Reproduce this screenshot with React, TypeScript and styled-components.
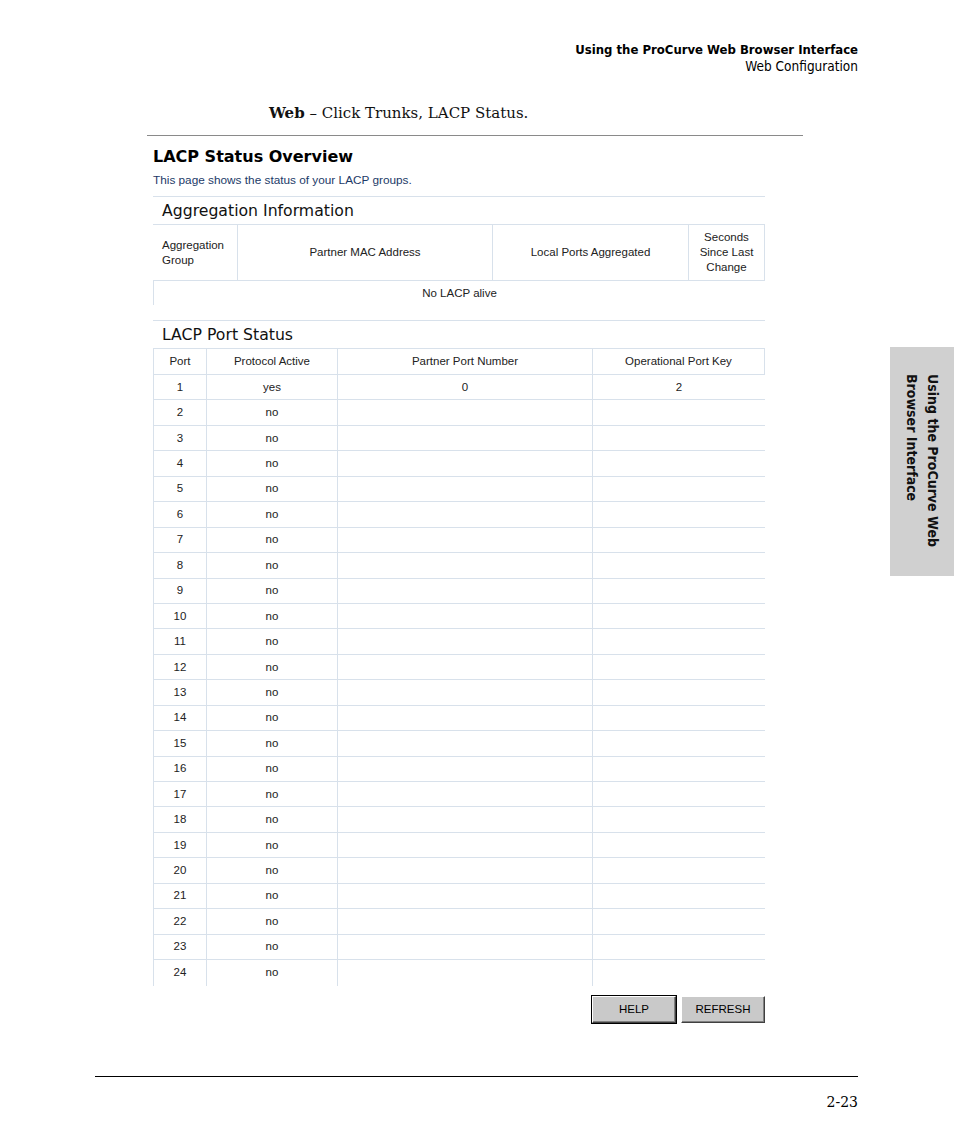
import styled, { createGlobalStyle } from 'styled-components';

// Column layouts for the two web tables (widths add up to 612px).
const aggCols = '84px 255px 196px 77px';
const portCols = '53px 131px 255px 173px';

const ports = Array.from({ length: 24 }, (_, i) => ({
  port: i + 1,
  active: i === 0 ? 'yes' : 'no',
  partner: i === 0 ? '0' : '',
  key: i === 0 ? '2' : '',
}));

function App() {
  return (
    <Page>
      <GlobalStyle />
      <Main>
        <RunningHead>
          <HeadTitle>Using the ProCurve Web Browser Interface</HeadTitle>
          <HeadSub>Web Configuration</HeadSub>
        </RunningHead>

        <Instruction>
          <b>Web</b> – Click Trunks, LACP Status.
        </Instruction>
        <Rule />

        <Panel>
          <Title>LACP Status Overview</Title>
          <Subtitle>This page shows the status of your LACP groups.</Subtitle>

          <SectionTitle>Aggregation Information</SectionTitle>
          <Table>
            <Row $cols={aggCols} $height={57} $head>
              <Cell $align="left">
                Aggregation
                <br />
                Group
              </Cell>
              <Cell $divider>Partner MAC Address</Cell>
              <Cell $divider>Local Ports Aggregated</Cell>
              <Cell $divider $last>
                Seconds
                <br />
                Since Last
                <br />
                Change
              </Cell>
            </Row>
            <Row $cols="612px" $height={24} $open>
              <Cell $divider>No LACP alive</Cell>
            </Row>
          </Table>

          <SectionTitle $gap={15}>LACP Port Status</SectionTitle>
          <Table>
            <Row $cols={portCols} $height={27} $head>
              <Cell $divider>Port</Cell>
              <Cell $divider>Protocol Active</Cell>
              <Cell $divider>Partner Port Number</Cell>
              <Cell $divider $last>
                Operational Port Key
              </Cell>
            </Row>
            {ports.map((p, i) => (
              <Row
                key={p.port}
                $cols={portCols}
                $height={25.45}
                $open={i === ports.length - 1}
              >
                <Cell $divider>{p.port}</Cell>
                <Cell $divider>{p.active}</Cell>
                <Cell $divider>{p.partner}</Cell>
                <Cell $divider>{p.key}</Cell>
              </Row>
            ))}
          </Table>

          <Buttons>
            <Button $default>HELP</Button>
            <Button>REFRESH</Button>
          </Buttons>
        </Panel>

        <Footer>
          <PageNumber>2-23</PageNumber>
        </Footer>
      </Main>

      <Side>
        <ThumbTab>
          <TabText>
            Using the ProCurve Web
            <br />
            Browser Interface
          </TabText>
        </ThumbTab>
      </Side>
    </Page>
  );
}

// Global Styles
const GlobalStyle = createGlobalStyle`
  html, body {
    margin: 0;
    padding: 0;
    background: #ffffff;
  }
  body {
    font-family: "Liberation Sans", Arial, sans-serif;
    color: #000;
  }
`;

// Page frame

const Page = styled.div`
  width: 954px;
  height: 1145px;
  display: grid;
  grid-template-columns: 890px 64px;
  background: #fff;
  overflow: hidden;
`;

const Main = styled.div`
  display: flex;
  flex-direction: column;
`;

const RunningHead = styled.header`
  padding-top: 41px;
  padding-right: 32px;
  text-align: right;
  font-family: "Liberation Sans Narrow", "DejaVu Sans Condensed", "Liberation Sans", sans-serif;
  font-stretch: condensed;
  font-size: 13px;
  line-height: 17px;
`;

const HeadTitle = styled.div`
  font-weight: bold;
`;

const HeadSub = styled.div`
  font-weight: normal;
  font-size: 13.5px;
`;

const Instruction = styled.p`
  margin: 29px 0 0 269px;
  font-family: "DejaVu Serif", "Liberation Serif", serif;
  font-size: 15px;
  line-height: 18px;
  color: #111;

  b {
    font-weight: bold;
  }
`;

const Rule = styled.hr`
  margin: 13px 0 0 147px;
  width: 656px;
  height: 0;
  border: none;
  border-top: 1px solid #8a8a8a;
`;

// Web page panel

const Panel = styled.section`
  margin-left: 153px;
  width: 612px;
  display: flex;
  flex-direction: column;
  font-family: "Liberation Sans", Arial, sans-serif;
  font-size: 11.5px;
  color: #222;
`;

const Title = styled.h1`
  margin: 11px 0 0;
  font-family: "DejaVu Sans", Verdana, sans-serif;
  font-size: 16px;
  line-height: 20px;
  font-weight: bold;
  color: #000;
`;

const Subtitle = styled.p`
  margin: 6px 0 0;
  font-size: 11.8px;
  line-height: 14px;
  color: #1c3a68;
`;

const SectionTitle = styled.h2<{ $gap?: number }>`
  margin: ${(p) => p.$gap ?? 9}px 0 0;
  padding: 4px 0 0 9px;
  border-top: 1px solid #d8e1eb;
  font-family: "DejaVu Sans", Verdana, sans-serif;
  font-size: 15.7px;
  line-height: 20px;
  font-weight: normal;
  color: #111;
`;

const Table = styled.div`
  margin-top: 3px;
  display: flex;
  flex-direction: column;
`;

const Row = styled.div<{ $cols: string; $height: number; $head?: boolean; $open?: boolean }>`
  display: grid;
  grid-template-columns: ${(p) => p.$cols};
  height: ${(p) => p.$height}px;
  box-sizing: border-box;
  border-top: ${(p) => (p.$head ? '1px solid #d8e1eb' : 'none')};
  border-bottom: ${(p) => (p.$open ? 'none' : '1px solid #d8e1eb')};
`;

const Cell = styled.div<{ $align?: 'left' | 'center'; $divider?: boolean; $last?: boolean }>`
  display: flex;
  align-items: center;
  justify-content: ${(p) => (p.$align === 'left' ? 'flex-start' : 'center')};
  text-align: ${(p) => p.$align ?? 'center'};
  padding: ${(p) => (p.$align === 'left' ? '0 0 0 9px' : '0')};
  box-sizing: border-box;
  line-height: 15px;
  border-left: ${(p) => (p.$divider ? '1px solid #d8e1eb' : 'none')};
  border-right: ${(p) => (p.$last ? '1px solid #d8e1eb' : 'none')};
`;

const Buttons = styled.div`
  margin-top: 10px;
  display: flex;
  justify-content: flex-end;
  gap: 5px;
`;

const Button = styled.button<{ $default?: boolean }>`
  width: 84px;
  height: 27px;
  padding: 0;
  box-sizing: border-box;
  background: #c9c9c9;
  font-family: "Liberation Sans", Arial, sans-serif;
  font-size: 11.5px;
  color: #000;
  border: 1px solid;
  border-color: #fff #404040 #404040 #fff;
  box-shadow: ${(p) =>
    p.$default
      ? '0 0 0 1px #000, inset -1px -1px 0 #808080'
      : 'inset -1px -1px 0 #808080'};
`;

// Page foot

const Footer = styled.footer`
  margin: 53px 32px 0 95px;
  border-top: 1px solid #000;
  padding-top: 16px;
  text-align: right;
`;

const PageNumber = styled.span`
  font-family: "DejaVu Serif", "Liberation Serif", serif;
  font-size: 14px;
  line-height: 18px;
`;

// Thumb tab on the outer edge

const Side = styled.aside`
  display: flex;
  flex-direction: column;
`;

const ThumbTab = styled.div`
  margin-top: 347px;
  height: 229px;
  box-sizing: border-box;
  padding-top: 27px;
  background: #d0d0d0;
  display: flex;
  justify-content: center;
`;

const TabText = styled.div`
  writing-mode: vertical-rl;
  font-family: "Liberation Sans Narrow", "DejaVu Sans Condensed", "Liberation Sans", sans-serif;
  font-stretch: condensed;
  font-weight: bold;
  font-size: 14px;
  line-height: 21px;
  color: #111;
`;

export default App;
